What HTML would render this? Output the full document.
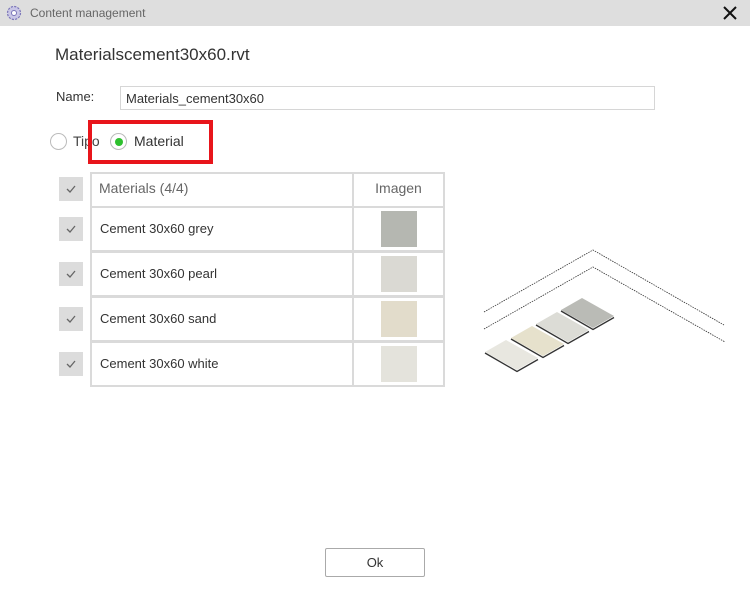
<!DOCTYPE html>
<html><head><style>
*{margin:0;padding:0;box-sizing:border-box}
body{width:750px;height:600px;background:#fff;font-family:"Segoe UI","Liberation Sans",sans-serif;position:relative;overflow:hidden;color:#333}
.a{position:absolute}
.tb{left:0;top:0;width:750px;height:26px;background:#dedede}
.cb{width:24px;height:24px;background:#dcdcdc;left:59px}
.cb svg{position:absolute;left:7px;top:8px}
.row{font-size:13px;color:#333}
</style></head><body>
<div class="a tb"></div>
<svg class="a" style="left:5px;top:4px" width="18" height="18" viewBox="0 0 18 18"><circle cx="9" cy="9" r="6.5" fill="#c9c6e6" stroke="#7a74b8" stroke-width="1.2" stroke-dasharray="2.2 1.2"/><circle cx="9" cy="9" r="2.5" fill="#fff" stroke="#7a74b8"/></svg>
<div class="a" style="left:30px;top:6px;font-size:12px;color:#666">Content management</div>
<svg class="a" style="left:723px;top:6px" width="14" height="14"><path d="M1 1L13 13M13 1L1 13" stroke="#111" stroke-width="2"/></svg>
<div class="a" style="left:55px;top:45px;font-size:17px;color:#333">Materialscement30x60.rvt</div>
<div class="a" style="left:56px;top:89px;font-size:13px">Name:</div>
<div class="a" style="left:120px;top:86px;width:535px;height:24px;border:1px solid #d6d6d6;font-size:13px;padding:4px 5px">Materials_cement30x60</div>
<div class="a" style="left:50px;top:133px;width:17px;height:17px;border:1px solid #bbb;border-radius:50%"></div>
<div class="a" style="left:73px;top:133px;font-size:14px;color:#444">Tipo</div>
<div class="a" style="left:110px;top:133px;width:17px;height:17px;border:1px solid #bbb;border-radius:50%"></div>
<div class="a" style="left:115px;top:138px;width:8px;height:8px;background:#2ec02e;border-radius:50%"></div>
<div class="a" style="left:134px;top:133px;font-size:14px;color:#333">Material</div>
<div class="a" style="left:88px;top:120px;width:125px;height:44px;border:4px solid #e8151b"></div>

<div class="a cb" style="top:177px"><svg width="10" height="8"><path d="M1 4L4 7L9 1" stroke="#666" stroke-width="1.3" fill="none"/></svg></div>
<div class="a cb" style="top:217px"><svg width="10" height="8"><path d="M1 4L4 7L9 1" stroke="#666" stroke-width="1.3" fill="none"/></svg></div>
<div class="a cb" style="top:262px"><svg width="10" height="8"><path d="M1 4L4 7L9 1" stroke="#666" stroke-width="1.3" fill="none"/></svg></div>
<div class="a cb" style="top:307px"><svg width="10" height="8"><path d="M1 4L4 7L9 1" stroke="#666" stroke-width="1.3" fill="none"/></svg></div>
<div class="a cb" style="top:352px"><svg width="10" height="8"><path d="M1 4L4 7L9 1" stroke="#666" stroke-width="1.3" fill="none"/></svg></div>

<div class="a" style="left:90px;top:172px;width:355px;height:215px;background:#dadada"></div>
<div class="a" style="left:92px;top:174px;width:260px;height:32px;background:#fff;font-size:14px;color:#666;padding:6px 7px">Materials (4/4)</div>
<div class="a" style="left:354px;top:174px;width:89px;height:32px;background:#fff;font-size:14px;color:#666;text-align:center;padding-top:6px">Imagen</div>

<div class="a row" style="left:92px;top:208px;width:260px;height:42px;background:#fff;padding:13px 8px">Cement 30x60 grey</div>
<div class="a" style="left:354px;top:208px;width:89px;height:42px;background:#fff"></div>
<div class="a" style="left:381px;top:211px;width:36px;height:36px;background:#b5b7b1"></div>
<div class="a row" style="left:92px;top:253px;width:260px;height:42px;background:#fff;padding:13px 8px">Cement 30x60 pearl</div>
<div class="a" style="left:354px;top:253px;width:89px;height:42px;background:#fff"></div>
<div class="a" style="left:381px;top:256px;width:36px;height:36px;background:#dad9d3"></div>
<div class="a row" style="left:92px;top:298px;width:260px;height:42px;background:#fff;padding:13px 8px">Cement 30x60 sand</div>
<div class="a" style="left:354px;top:298px;width:89px;height:42px;background:#fff"></div>
<div class="a" style="left:381px;top:301px;width:36px;height:36px;background:#e2dccb"></div>
<div class="a row" style="left:92px;top:343px;width:260px;height:42px;background:#fff;padding:13px 8px">Cement 30x60 white</div>
<div class="a" style="left:354px;top:343px;width:89px;height:42px;background:#fff"></div>
<div class="a" style="left:381px;top:346px;width:36px;height:36px;background:#e4e3dc"></div>

<svg class="a" style="left:0;top:0" width="750" height="600">
<g fill="none" stroke="#333" stroke-width="0.8" stroke-dasharray="1.5 1">
<path d="M484 312L593 250L724 325"/><path d="M484 329L593 267L725 342"/></g>
<g stroke="#333" stroke-width="1.3">
<path d="M561 311L593 329.5L614 317.5" fill="none"/>
<path d="M536 325L568 343.5L589 331.5" fill="none"/>
<path d="M511 339L543 357.5L564 345.5" fill="none"/>
<path d="M485 353L517 371.5L538 359.5" fill="none"/>
</g>
<polygon points="561,310 582,298 614,316 593,328" fill="#babbb6"/>
<polygon points="536,324 557,312 589,330 568,342" fill="#dcdcd6"/>
<polygon points="511,338 532,326 564,344 543,356" fill="#e6e1cc"/>
<polygon points="485,352 506,340 538,358 517,370" fill="#e8e7e0"/>
</svg>

<div class="a" style="left:325px;top:548px;width:100px;height:29px;border:1px solid #aaa;border-radius:2px;font-size:13px;text-align:center;padding-top:6px;color:#333">Ok</div>
</body></html>
